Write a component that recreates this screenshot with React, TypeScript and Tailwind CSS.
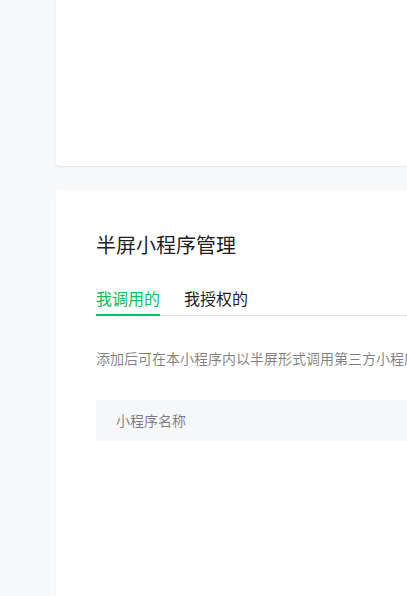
export default function App() {
  const font = { fontFamily: '"Noto Sans CJK SC", "Noto Sans", sans-serif' };

  return (
    <div className="h-[596px] w-[407px] overflow-hidden bg-[#f7f8fa] flex" style={font}>
      {/* left rail */}
      <div className="w-[56px] shrink-0" />

      {/* main column */}
      <div className="flex-1 flex flex-col gap-[24px] min-w-0">
        {/* upper card (cut off at top) */}
        <div className="h-[166px] shrink-0 bg-white rounded-bl-[4px] shadow-[0_1px_2px_rgba(0,0,0,0.08)]" />

        {/* half-screen mini program card */}
        <div className="flex-1 bg-white rounded-tl-[4px] shadow-[0_1px_2px_rgba(0,0,0,0.06)] pl-[40px] pt-[41px]">
          <h2 className="text-[20px] leading-[28px] text-black/90 whitespace-nowrap">半屏小程序管理</h2>

          {/* tabs */}
          <div className="mt-[27px] flex gap-[24px] border-b border-[#e5e5e5] whitespace-nowrap">
            <div className="text-[16px] leading-[24px] text-[#07c160] pb-[4px] border-b-2 border-[#07c160] -mb-px">
              我调用的
            </div>
            <div className="text-[16px] leading-[24px] text-black/90 pb-[4px]">我授权的</div>
          </div>

          {/* description */}
          <p className="mt-[31px] text-[14px] leading-[22px] text-black/50 whitespace-nowrap">
            添加后可在本小程序内以半屏形式调用第三方小程序，最多可添加10个
          </p>

          {/* table header */}
          <div className="mt-[31px] h-[41px] bg-[#f6f7f9] flex items-center pl-[20px]">
            <span className="text-[14px] text-black/50 whitespace-nowrap">小程序名称</span>
          </div>
        </div>
      </div>
    </div>
  );
}
